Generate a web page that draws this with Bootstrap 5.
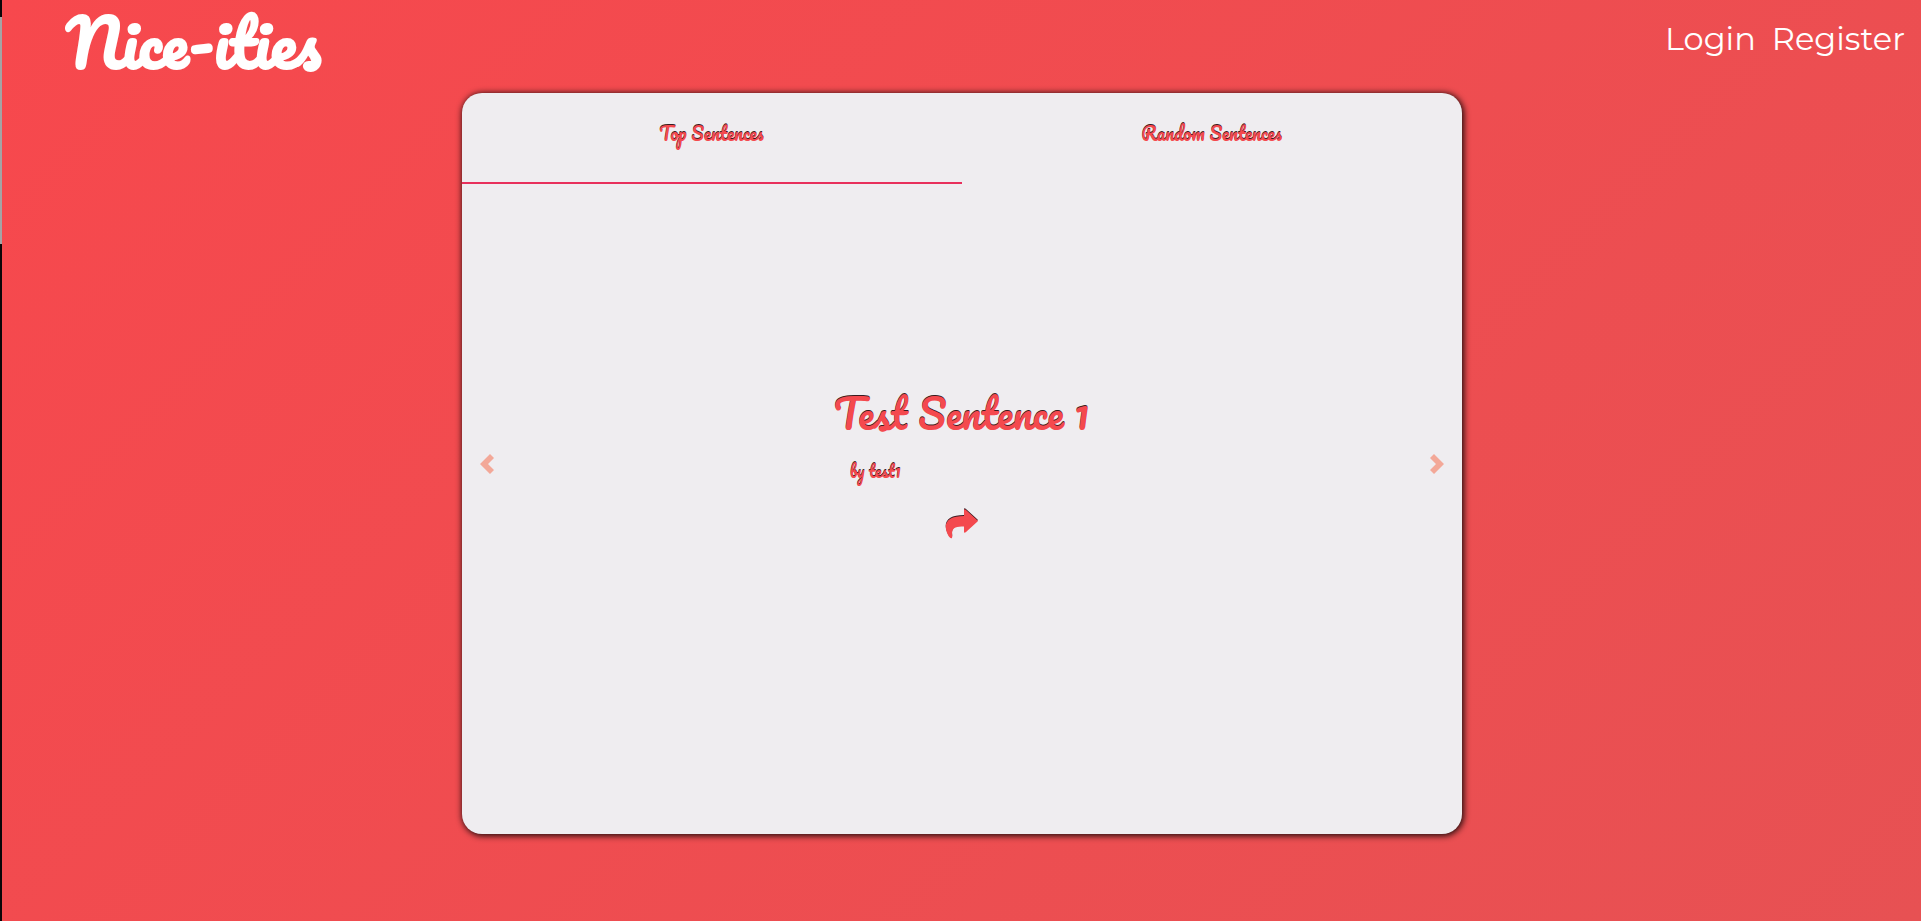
<!DOCTYPE html>
<html lang="en">
<head>
<meta charset="utf-8">
<meta name="viewport" content="width=device-width, initial-scale=1">
<title>Nice-ities</title>
<link href="https://cdn.jsdelivr.net/npm/bootstrap@5.3.0/dist/css/bootstrap.min.css" rel="stylesheet">
<style>
  :root { --ink: #f4494e; --paper: #efedf0; --script: Pacifico, Lato, cursive; }
  body { background: linear-gradient(135deg, #f7484d, #e75153) fixed; font-family: Montserrat, Inter, sans-serif; }
  .side-track { width: 2px; background: #0b0608; padding-top: 17px; }
  .side-thumb { height: 227px; background: #a5a3a5; }
  .script { font-family: var(--script); font-weight: 400; }
  .brand { font-size: 64px; font-weight: 700; line-height: 84px; margin-left: 64px; color: #fff; }
  .account { padding-top: 19px; }
  .account a { font-size: 32px; line-height: 40px; }
  .sheet { max-width: 1000px; min-height: 741px; margin-top: 9px; border-radius: 20px; background: var(--paper); box-shadow: 1px 1px 6px 1px rgba(0, 0, 0, .85); overflow: hidden; }
  .etched { color: var(--ink); text-shadow: 0 -1px 0 #3a1a20; }
  .tab { height: 91px; padding-bottom: 10px; font-size: 18px; border: 0; border-bottom: 2px solid transparent; background: none; }
  .tab.active { border-bottom-color: #e8305c; }
  .stage { padding: 0 18px 90px; }
  .arrow { color: #f3a898; background: none; border: 0; padding: 0; line-height: 0; }
  .sentence { font-size: 40px; line-height: 56px; margin-bottom: 18px; }
  .author { font-size: 16px; line-height: 24px; margin-bottom: 26px; }
  .share svg { filter: drop-shadow(0 -1px 0 #3a1a20); }
</style>
</head>
<body>
<div class="d-flex min-vh-100">
  <div class="side-track flex-shrink-0"><div class="side-thumb"></div></div>
  <div class="flex-grow-1">
    <header class="d-flex justify-content-between align-items-start">
      <a href="#" class="script brand text-decoration-none">Nice-ities</a>
      <nav class="account d-flex gap-3 pe-3">
        <a href="#" class="text-white text-decoration-none">Login</a>
        <a href="#" class="text-white text-decoration-none">Register</a>
      </nav>
    </header>
    <main class="sheet mx-auto d-flex flex-column">
      <div class="d-flex" role="tablist">
        <button type="button" role="tab" aria-selected="true" class="tab active etched script w-50">Top Sentences</button>
        <button type="button" role="tab" aria-selected="false" class="tab etched script w-50">Random Sentences</button>
      </div>
      <section class="stage flex-grow-1 d-flex align-items-center justify-content-between">
        <button type="button" class="arrow" aria-label="Previous"><svg width="14" height="20" viewBox="0 0 14 20" fill="currentColor"><path d="M10 0l4 4-6 6 6 6-4 4L0 10z"/></svg></button>
        <article class="script etched pb-1">
          <h1 class="script sentence">Test Sentence 1</h1>
          <p class="author ps-3">by test1</p>
          <div class="text-center">
            <button type="button" class="arrow share" aria-label="Share"><svg width="33" height="30" viewBox="0 0 33 30" fill="#f4494e"><path d="M19 1c0-1 1-1 2 0l11 10c1 1 1 1 0 2L21 23c-1 1-2 1-2 0v-5.500C12 17.500 7.500 18 7 24c0 2 .5 3 0 5-1 1-3-1-4-3C-3 14 3 7 19 7z"/></svg></button>
          </div>
        </article>
        <button type="button" class="arrow" aria-label="Next"><svg width="14" height="20" viewBox="0 0 14 20" fill="currentColor"><path d="M4 0L0 4l6 6-6 6 4 4 10-10z"/></svg></button>
      </section>
    </main>
  </div>
</div>
<script src="https://cdn.jsdelivr.net/npm/bootstrap@5.3.0/dist/js/bootstrap.bundle.min.js"></script>
</body>
</html>
